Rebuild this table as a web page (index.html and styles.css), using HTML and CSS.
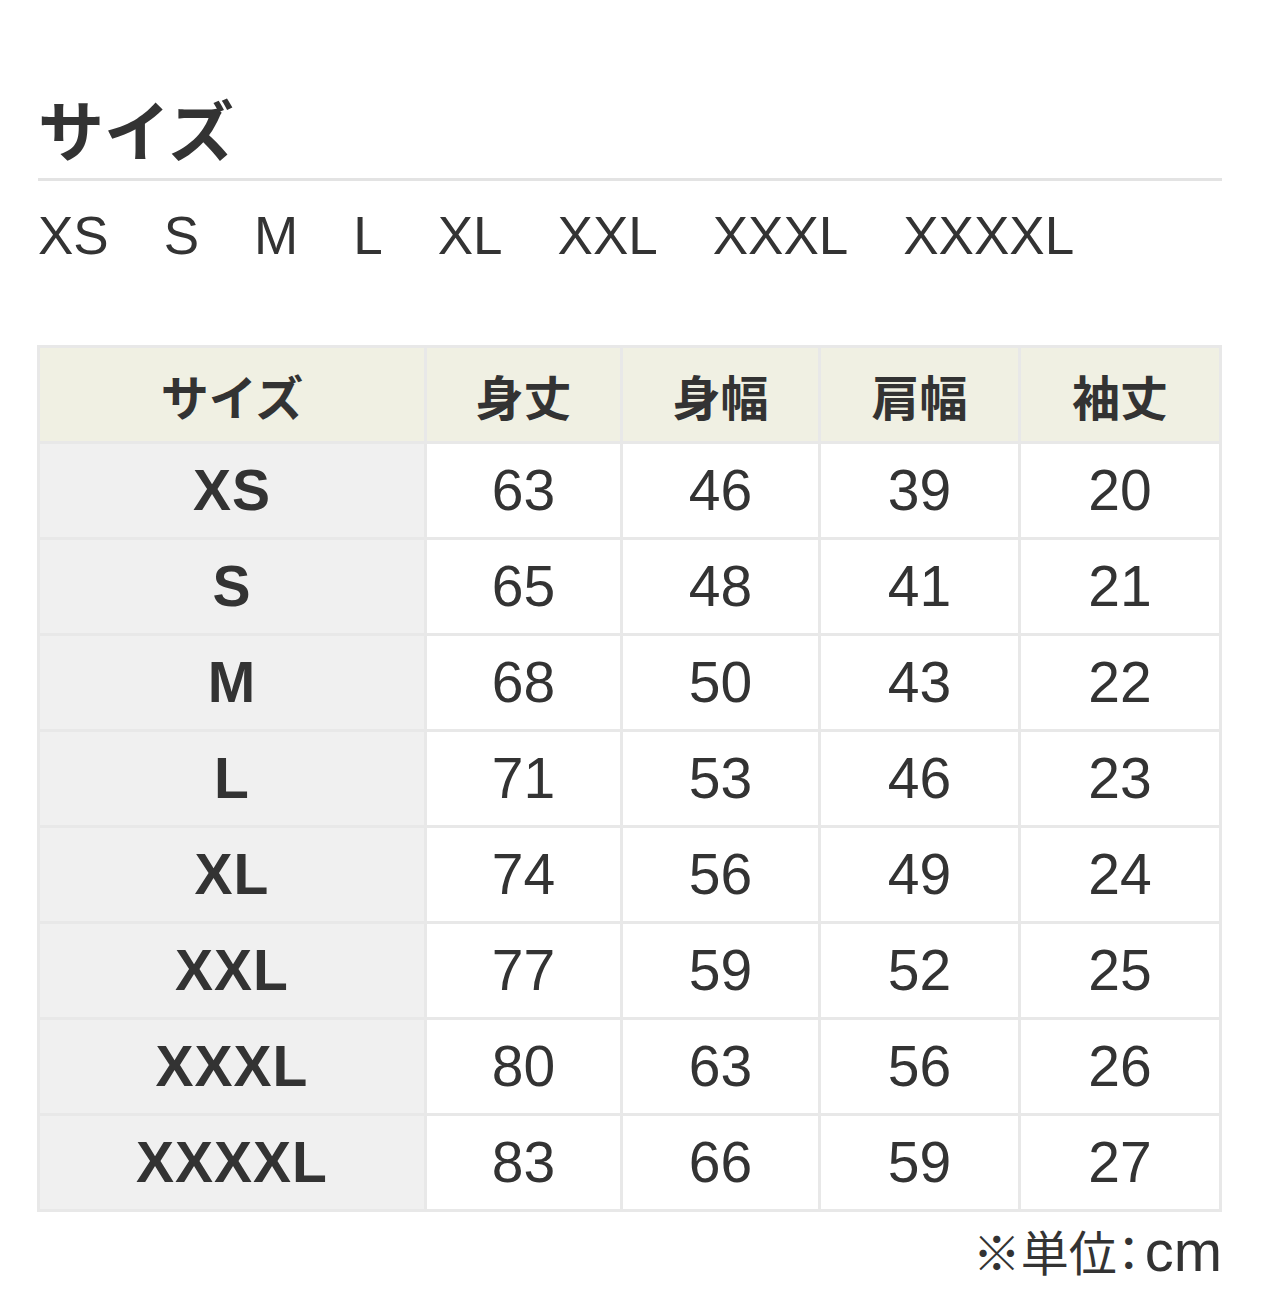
FILE: index.html
```html
<!DOCTYPE html>
<html lang="ja">
<head>
<meta charset="utf-8">
<title>サイズ</title>
<link rel="stylesheet" href="styles.css">
</head>
<body>
<main class="page">
  <h2 class="title">サイズ</h2>
  <ul class="sizes">
    <li>XS</li><li>S</li><li>M</li><li>L</li><li>XL</li><li>XXL</li><li>XXXL</li><li>XXXXL</li>
  </ul>
  <table class="chart">
    <colgroup>
      <col class="c-size"><col class="c1"><col class="c2"><col class="c3"><col class="c4">
    </colgroup>
    <thead>
      <tr><th>サイズ</th><th>身丈</th><th>身幅</th><th>肩幅</th><th>袖丈</th></tr>
    </thead>
    <tbody>
      <tr><th>XS</th><td>63</td><td>46</td><td>39</td><td>20</td></tr>
      <tr><th>S</th><td>65</td><td>48</td><td>41</td><td>21</td></tr>
      <tr><th>M</th><td>68</td><td>50</td><td>43</td><td>22</td></tr>
      <tr><th>L</th><td>71</td><td>53</td><td>46</td><td>23</td></tr>
      <tr><th>XL</th><td>74</td><td>56</td><td>49</td><td>24</td></tr>
      <tr><th>XXL</th><td>77</td><td>59</td><td>52</td><td>25</td></tr>
      <tr><th>XXXL</th><td>80</td><td>63</td><td>56</td><td>26</td></tr>
      <tr><th>XXXXL</th><td>83</td><td>66</td><td>59</td><td>27</td></tr>
    </tbody>
  </table>
  <p class="note">※単位：<span class="unit">cm</span></p>
</main>
</body>
</html>
```
FILE: styles.css
```css
html, body {
  margin: 0;
  padding: 0;
  background: #ffffff;
}
body {
  font-family: "Liberation Sans", "Noto Sans CJK JP", sans-serif;
  color: #333333;
}
.page {
  padding: 90px 58px 0 38px;
}
.title {
  margin: 0;
  font-family: "Noto Sans CJK JP", sans-serif;
  font-size: 66px;
  font-weight: 700;
  line-height: 74px;
  padding-bottom: 14px;
  border-bottom: 3px solid #e3e3e3;
}
.sizes {
  list-style: none;
  margin: 0;
  padding: 0;
  display: flex;
  gap: 55px;
  height: 108px;
  align-items: center;
  padding-bottom: 56px;
  box-sizing: content-box;
  font-size: 53px;
  font-weight: 400;
  line-height: 1;
}
.sizes li {
  color: #333;
}
.chart {
  width: 1185px;
  border-collapse: collapse;
  table-layout: fixed;
  margin-left: -1px;
}
.c-size { width: 387px; }
.c1 { width: 196px; }
.c2 { width: 198px; }
.c3 { width: 200px; }
.c4 { width: 201px; }
.chart th, .chart td {
  border: 3px solid #e8e8e8;
  height: 93px;
  padding: 0;
  text-align: center;
  vertical-align: middle;
  line-height: 1;
}
.chart thead th {
  background: #f0f0e3;
  font-family: "Noto Sans CJK JP", sans-serif;
  font-size: 48px;
  font-weight: 700;
}
.chart tbody th {
  background: #f0f0f0;
  font-size: 57px;
  font-weight: 700;
  letter-spacing: 1px;
}
.chart td {
  background: #ffffff;
  font-size: 57px;
  font-weight: 400;
}
.note {
  margin: 10px 0 0;
  text-align: right;
  font-family: "Noto Sans CJK JP", sans-serif;
  font-feature-settings: "palt";
  font-size: 48px;
  line-height: 56px;
}
.unit {
  font-family: "Liberation Sans", sans-serif;
  font-size: 58px;
  margin-left: 4px;
}
```
